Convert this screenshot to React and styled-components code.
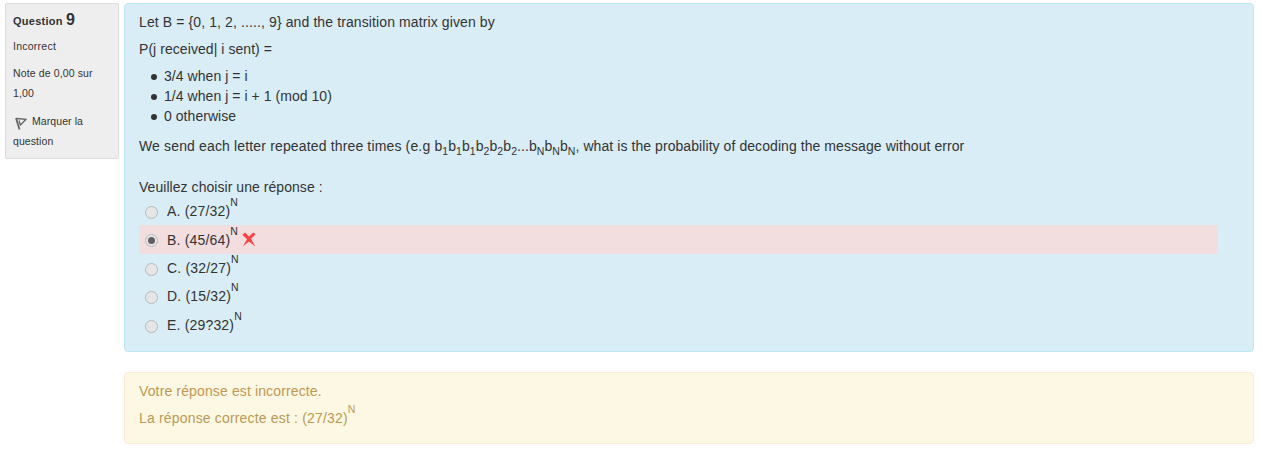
import React from "react";
import styled, { createGlobalStyle } from "styled-components";

const GlobalStyle = createGlobalStyle`
  body {
    margin: 0;
    background: #fff;
    color: #333;
    font: 14px/20px "Liberation Sans", Arial, sans-serif;
  }
`;

const Question = styled.div`
  display: flex;
  align-items: flex-start;
  gap: 5px;
  padding: 3px 8px 0 5px;
`;

const Info = styled.aside`
  box-sizing: border-box;
  width: 114px;
  height: 156px;
  padding: 6px 7px;
  background: #eee;
  border: 1px solid #dcdcdc;
  border-radius: 2px;
  font-size: 10.5px;
`;

const Heading = styled.h3`
  margin: 0;
  font-size: 11px;
  line-height: 20px;
  letter-spacing: 0.25px;
`;

const Number = styled.span`
  font-size: 16px;
  line-height: 20px;
`;

const InfoLine = styled.div`
  margin-top: ${(p) => p.$gap}px;
  letter-spacing: ${(p) => p.$track ?? 0.13}px;
`;

const FlagIcon = styled.svg`
  width: 12px;
  height: 13px;
  margin: 0 5px 0 2px;
  vertical-align: -5px;
`;

const Content = styled.main`
  flex: 1;
  display: flex;
  flex-direction: column;
  gap: 20px;
`;

const Panel = styled.section`
  box-sizing: border-box;
  height: ${(p) => p.$height}px;
  padding: 8px 35px 0 14px;
  border: 1px solid ${(p) => (p.$feedback ? "#fbeed5" : "#bce8f1")};
  border-radius: 4px;
  background: ${(p) => (p.$feedback ? "#fcf8e3" : "#d9edf7")};
  color: ${(p) => (p.$feedback ? "#c09853" : "#333")};
`;

const Paragraph = styled.p`
  height: 20px;
  margin: 0 0 ${(p) => p.$after ?? 0}px;
  white-space: nowrap;
  letter-spacing: ${(p) => p.$track ?? 0}px;
`;

const Tracked = styled.span`
  letter-spacing: ${(p) => p.$track}px;
`;

const List = styled.ul`
  margin: 0 0 10px;
  padding: 0 0 0 12px;
  list-style: none;
  letter-spacing: 0.05px;
`;

const Item = styled.li`
  display: flex;
  align-items: center;
  gap: 7px;

  &::before {
    content: "";
    width: 6px;
    height: 6px;
    margin-top: 1px;
    border-radius: 50%;
    background: #333;
  }
`;

const Sub = styled.sub`
  position: relative;
  bottom: -0.4em;
  vertical-align: baseline;
  font-size: 10.5px;
  line-height: 0;
`;

const Sup = styled.sup`
  position: relative;
  top: -0.95em;
  vertical-align: baseline;
  font-size: 10.5px;
  line-height: 0;
`;

const Answer = styled.label`
  display: flex;
  align-items: center;
  height: 28.4px;
  padding-left: 6px;
  background: ${(p) => (p.$wrong ? "#f2dede" : "transparent")};
  letter-spacing: 0.18px;
`;

const Radio = styled.span`
  box-sizing: border-box;
  display: grid;
  place-items: center;
  width: 13px;
  height: 13px;
  margin: 2.7px 9px 0 0;
  border: 1px solid #b9b9b9;
  border-radius: 50%;
  background: #e6e6e6;

  &::after {
    content: "";
    width: 7px;
    height: 7px;
    border-radius: 50%;
    background: ${(p) => (p.$checked ? "#606060" : "transparent")};
  }
`;

const CrossIcon = styled.svg`
  width: 14px;
  height: 15px;
  margin-left: 4px;
`;

const answers = [
  { label: "A. (27/32)" },
  { label: "B. (45/64)", checked: true },
  { label: "C. (32/27)" },
  { label: "D. (15/32)" },
  { label: "E. (29?32)" },
];

const letters = ["1", "1", "1", "2", "2", "2"];

export default function App() {
  return (
    <>
      <GlobalStyle />
      <Question>
        <Info>
          <Heading>
            Question <Number>9</Number>
          </Heading>
          <InfoLine $gap={5} $track={0.25}>Incorrect</InfoLine>
          <InfoLine $gap={7}>Note de 0,00 sur 1,00</InfoLine>
          <InfoLine $gap={8} $track={0.08}>
            <FlagIcon viewBox="0 0 12 13" fill="none" stroke="#666">
              <path d="M1 1L4.5 12.5" strokeWidth="1.8" />
              <path d="M1.5 1.5L11 2.3L5 8.5M4 3.5L5.2 7.5" strokeWidth="1.3" />
            </FlagIcon>
            Marquer la question
          </InfoLine>
        </Info>
        <Content>
          <Panel $height={349}>
            <Paragraph $after={7} $track={0.11}>
              Let B = {"{0, 1, 2, ....., 9}"} and the transition matrix given by
            </Paragraph>
            <Paragraph $after={7} $track={0.06}>
              P(j received| i sent) =
            </Paragraph>
            <List>
              <Item>3/4 when j = i</Item>
              <Item>1/4 when j = i + 1 (mod 10)</Item>
              <Item>0 otherwise</Item>
            </List>
            <Paragraph $after={21} $track={0.07}>
              <Tracked $track={0.15}>
                We send each letter repeated three times (e.g{" "}
              </Tracked>
              {letters.map((n, i) => (
                <React.Fragment key={i}>
                  b<Sub>{n}</Sub>
                </React.Fragment>
              ))}
              ...b<Sub>N</Sub>b<Sub>N</Sub>b<Sub>N</Sub>, what is the probability of
              decoding the message without error
            </Paragraph>
            <Paragraph $track={0.05}>Veuillez choisir une réponse :</Paragraph>
            {answers.map(({ label, checked }) => (
              <Answer key={label} $wrong={checked}>
                <Radio $checked={checked} />
                <span>
                  {label}
                  <Sup>N</Sup>
                </span>
                {checked && (
                  <CrossIcon viewBox="0 0 14 15" fill="#ff4242">
                    <path d="M0.3 2.7L3.2 0.6L7 4.5L11.2 0.6L13.6 2.2L9 6.8L13.2 14.4L7 9.5L0.8 14.6L5 7.2Z" />
                  </CrossIcon>
                )}
              </Answer>
            ))}
          </Panel>
          <Panel $height={72} $feedback>
            <Paragraph $after={7} $track={0.13}>
              Votre réponse est incorrecte.
            </Paragraph>
            <Paragraph $track={0.17}>
              La réponse correcte est : (27/32)<Sup>N</Sup>
            </Paragraph>
          </Panel>
        </Content>
      </Question>
    </>
  );
}
